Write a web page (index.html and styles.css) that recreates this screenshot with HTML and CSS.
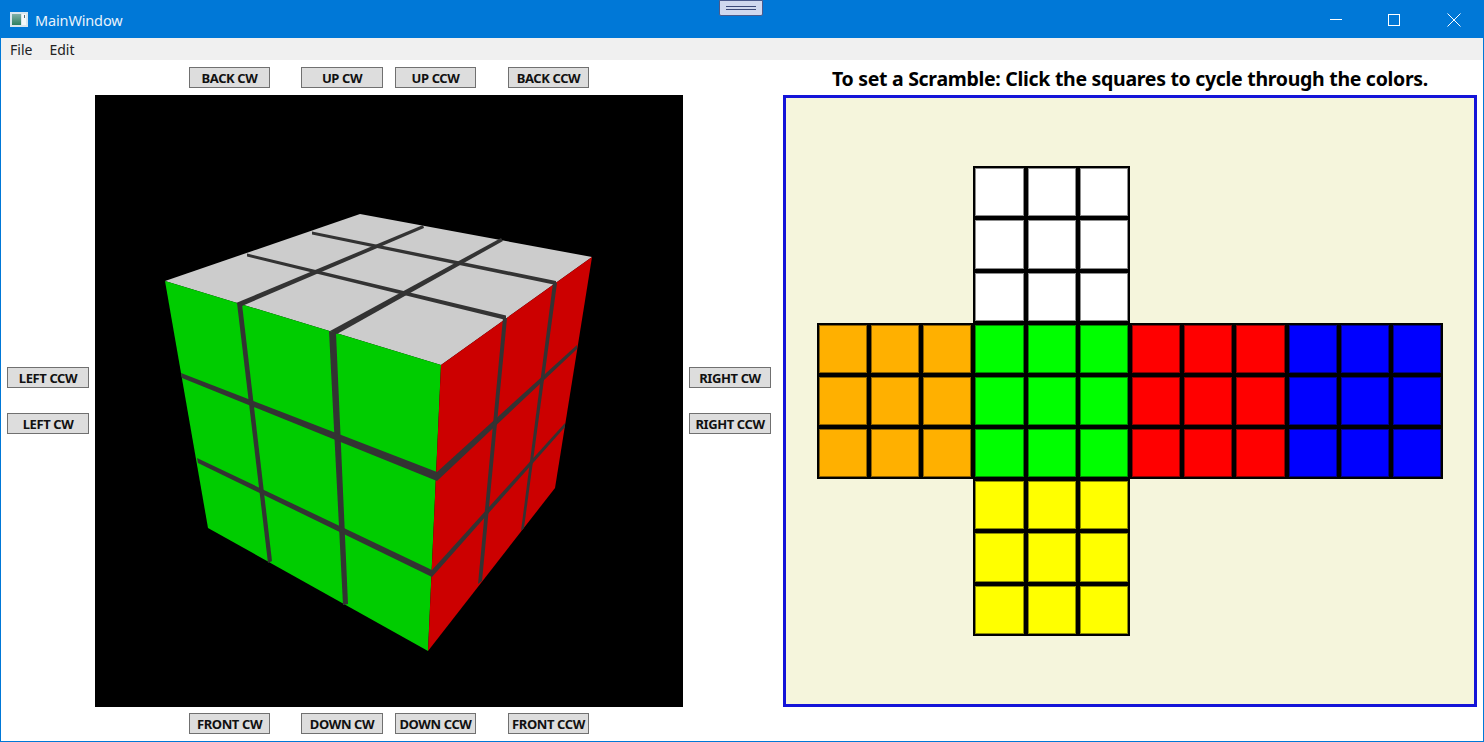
FILE: index.html
```html
<!DOCTYPE html>
<html lang="en">
<head>
    <meta charset="UTF-8">
    <meta name="viewport" content="width=device-width, initial-scale=1.0">
    <title>MainWindow</title>
    <link rel="stylesheet" href="styles.css">
</head>
<body>
    <div class="window">
        <div class="titlebar">
            <svg class="app-icon" width="18" height="15" viewBox="0 0 18 15">
                <defs>
                    <linearGradient id="iconFill" x1="0" y1="0" x2="0" y2="1">
                        <stop offset="0" stop-color="#7fb0a8"/>
                        <stop offset="1" stop-color="#2f7f5f"/>
                    </linearGradient>
                </defs>
                <rect x="0" y="0" width="18" height="15" fill="#d9e6ee"/>
                <rect x="2" y="2" width="9" height="11" fill="url(#iconFill)"/>
                <rect x="12" y="2" width="4" height="11" fill="#f4f8fa"/>
                <rect x="14" y="3" width="1" height="3" fill="#55707c"/>
            </svg>
            <span class="app-title">MainWindow</span>
            <button class="snap-handle"><span class="snap-lines"></span></button>
            <div class="window-controls">
                <svg width="14" height="14" viewBox="0 0 14 14"><path d="M1 6.5H13" stroke="#fff" fill="none"/></svg>
                <svg width="14" height="14" viewBox="0 0 14 14"><rect x="1.5" y="1.5" width="11" height="11" stroke="#fff" fill="none"/></svg>
                <svg class="close-icon" width="14" height="14" viewBox="0 0 14 14"><path d="M0.5 0.5L13.5 13.5M13.5 0.5L0.5 13.5" stroke="#fff" fill="none"/></svg>
            </div>
        </div>

        <div class="menubar">
            <span class="menu-item">File</span>
            <span class="menu-item">Edit</span>
        </div>

        <div class="content">
            <div class="cube-pane">
                <div class="btn-row top-row">
                    <button class="move-btn">BACK CW</button>
                    <button class="move-btn wide">UP CW</button>
                    <button class="move-btn">UP CCW</button>
                    <button class="move-btn">BACK CCW</button>
                </div>

                <div class="side-btns left-side">
                    <button class="move-btn wide">LEFT CCW</button>
                    <button class="move-btn wide">LEFT CW</button>
                </div>

                <svg class="viewport" width="588" height="612" viewBox="95 95 588 612">
                    <polygon class="top-face" points="360,214 592,257 441,365 165,281"/>
                    <polygon class="front-face" points="165,281 441,365 428,651 208,528"/>
                    <polygon class="right-face" points="441,365 592,257 555,488 428,651"/>

                    <polygon class="seam" points="236,303 423,225 424,228 242,306"/>
                    <polygon class="seam" points="330,331 501,238 503,241 337,334"/>
                    <polygon class="seam" points="247,253.5 506,315.5 506,320 247,256.5"/>
                    <polygon class="seam" points="312,231.5 556,281 556,285 312,234.5"/>

                    <polygon class="seam" points="237,303 242,304 272,561 268,563"/>
                    <polygon class="seam" points="329,331 336,333 348,604 343,605"/>
                    <polygon class="seam" points="181,373 437,472 437,481 182,378"/>
                    <polygon class="seam" points="197,458 432,570 432,577 198,463"/>

                    <polygon class="seam" points="437,472 577,345 577,349 437,481"/>
                    <polygon class="seam" points="432,570 565,423 565,427 432,577"/>
                    <polygon class="seam" points="503,318 507,318 482,581 478,584"/>
                    <polygon class="seam" points="553,283 557,283 524,528 521,531"/>
                </svg>

                <div class="side-btns right-side">
                    <button class="move-btn wide">RIGHT CW</button>
                    <button class="move-btn wide">RIGHT CCW</button>
                </div>

                <div class="btn-row bottom-row">
                    <button class="move-btn">FRONT CW</button>
                    <button class="move-btn wide">DOWN CW</button>
                    <button class="move-btn">DOWN CCW</button>
                    <button class="move-btn">FRONT CCW</button>
                </div>
            </div>

            <div class="scramble-pane">
                <h2 class="scramble-title">To set a Scramble: Click the squares to cycle through the colors.</h2>
                <div class="scramble-panel">
                    <div class="net">
                        <div class="face face-up">
                            <div class="tile white"></div><div class="tile white"></div><div class="tile white"></div>
                            <div class="tile white"></div><div class="tile white"></div><div class="tile white"></div>
                            <div class="tile white"></div><div class="tile white"></div><div class="tile white"></div>
                        </div>
                        <div class="face face-left">
                            <div class="tile orange"></div><div class="tile orange"></div><div class="tile orange"></div>
                            <div class="tile orange"></div><div class="tile orange"></div><div class="tile orange"></div>
                            <div class="tile orange"></div><div class="tile orange"></div><div class="tile orange"></div>
                        </div>
                        <div class="face face-front">
                            <div class="tile green"></div><div class="tile green"></div><div class="tile green"></div>
                            <div class="tile green"></div><div class="tile green"></div><div class="tile green"></div>
                            <div class="tile green"></div><div class="tile green"></div><div class="tile green"></div>
                        </div>
                        <div class="face face-right">
                            <div class="tile red"></div><div class="tile red"></div><div class="tile red"></div>
                            <div class="tile red"></div><div class="tile red"></div><div class="tile red"></div>
                            <div class="tile red"></div><div class="tile red"></div><div class="tile red"></div>
                        </div>
                        <div class="face face-back">
                            <div class="tile blue"></div><div class="tile blue"></div><div class="tile blue"></div>
                            <div class="tile blue"></div><div class="tile blue"></div><div class="tile blue"></div>
                            <div class="tile blue"></div><div class="tile blue"></div><div class="tile blue"></div>
                        </div>
                        <div class="face face-down">
                            <div class="tile yellow"></div><div class="tile yellow"></div><div class="tile yellow"></div>
                            <div class="tile yellow"></div><div class="tile yellow"></div><div class="tile yellow"></div>
                            <div class="tile yellow"></div><div class="tile yellow"></div><div class="tile yellow"></div>
                        </div>
                    </div>
                </div>
            </div>
        </div>
    </div>
</body>
</html>
```

FILE: styles.css
```css
* {
    margin: 0;
    padding: 0;
    box-sizing: border-box;
}

html, body {
    height: 100%;
    overflow: hidden;
}

body {
    font-family: "Noto Sans", "Open Sans", sans-serif;
    background: white;
}

.window {
    width: 1484px;
    height: 742px;
    border: 1px solid #0078d7;
    display: flex;
    flex-direction: column;
    background: white;
}

.titlebar {
    height: 37px;
    flex-shrink: 0;
    background: #0078d7;
    display: flex;
    align-items: center;
    padding-left: 9px;
    position: relative;
    color: #e8f2fb;
}

.app-icon {
    margin-right: 7px;
}

.app-title {
    font-size: 14.5px;
    letter-spacing: -0.15px;
}

.snap-handle {
    position: absolute;
    left: 718px;
    top: -1px;
    width: 44px;
    height: 16px;
    background: #d0d8ee;
    border: 1px solid #4a5a8c;
    border-radius: 0 0 2px 2px;
    display: flex;
    align-items: center;
    justify-content: center;
}

.snap-lines {
    width: 30px;
    height: 4px;
    border-top: 1px solid #3c4a78;
    border-bottom: 1px solid #3c4a78;
}

.window-controls {
    margin-left: auto;
    display: flex;
    align-items: center;
    gap: 44px;
    padding-right: 22px;
}

.close-icon {
    margin-left: 2px;
}

.menubar {
    height: 22px;
    flex-shrink: 0;
    background: #f0f0f0;
    display: flex;
    align-items: center;
    gap: 17px;
    padding-left: 9px;
    font-size: 14px;
    color: #222;
}

.content {
    flex: 1;
    display: flex;
    min-height: 0;
}

.cube-pane {
    width: 782px;
    display: grid;
    grid-template-columns: 94px 588px 100px;
    grid-template-rows: 35px 612px 34px;
}

.viewport {
    display: block;
    grid-column: 2;
    grid-row: 2;
    background: black;
}

.top-face { fill: #cccccc; }
.front-face { fill: #00cc00; }
.right-face { fill: #cc0000; }
.seam { fill: #333333; }

.btn-row {
    grid-column: 1 / 4;
    display: flex;
    padding-left: 188px;
}

.top-row {
    grid-row: 1;
    padding-top: 7px;
}

.bottom-row {
    grid-row: 3;
    padding-top: 6px;
}

.move-btn {
    width: 81px;
    height: 21px;
    background: #dddddd;
    border: 1px solid #707070;
    font-family: "Noto Sans", "Open Sans", sans-serif;
    font-size: 13px;
    font-weight: bold;
    letter-spacing: -0.4px;
    color: #111;
    white-space: nowrap;
}

.move-btn.wide {
    width: 82px;
}

.btn-row .move-btn:nth-child(2) {
    margin-left: 31px;
}

.btn-row .move-btn:nth-child(3) {
    margin-left: 12px;
}

.btn-row .move-btn:nth-child(4) {
    margin-left: 32px;
}

.side-btns {
    grid-row: 2;
    display: flex;
    flex-direction: column;
    gap: 25px;
}

.left-side {
    grid-column: 1;
    padding: 272px 0 0 6px;
}

.right-side {
    grid-column: 3;
    padding: 272px 0 0 6px;
}

.scramble-pane {
    flex: 1;
    display: flex;
    flex-direction: column;
    padding-right: 6px;
}

.scramble-title {
    height: 35px;
    font-size: 19.5px;
    font-weight: bold;
    line-height: 38px;
    letter-spacing: -0.3px;
    text-align: center;
    color: #000;
}

.scramble-panel {
    height: 612px;
    background: #f5f5dc;
    border: 3px solid #1414d8;
    display: flex;
    align-items: center;
    justify-content: center;
}

.net {
    display: grid;
    grid-template-columns: repeat(4, 156.6px);
    grid-template-rows: repeat(3, 156.6px);
}

.face {
    display: grid;
    grid-template-columns: repeat(3, 1fr);
    grid-template-rows: repeat(3, 1fr);
}

.face-up { grid-column: 2; grid-row: 1; }
.face-left { grid-column: 1; grid-row: 2; }
.face-front { grid-column: 2; grid-row: 2; }
.face-right { grid-column: 3; grid-row: 2; }
.face-back { grid-column: 4; grid-row: 2; }
.face-down { grid-column: 2; grid-row: 3; }

.tile {
    border: 2px solid #000;
    box-shadow: inset 0 0 0 1px rgba(0, 0, 0, 0.45);
}

.white { background: #ffffff; }
.orange { background: #ffb000; }
.green { background: #00ff00; }
.red { background: #ff0000; }
.blue { background: #0000ff; }
.yellow { background: #ffff00; }
```
